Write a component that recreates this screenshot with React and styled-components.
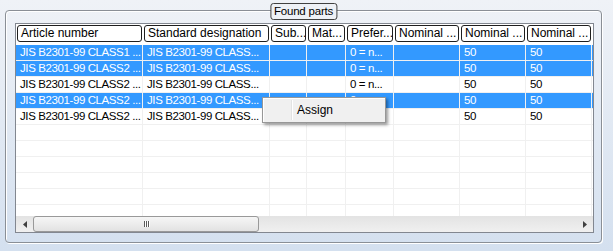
import styled, { createGlobalStyle } from 'styled-components';

const columns = [
  { title: 'Article number', width: 127 },
  { title: 'Standard designation', width: 127 },
  { title: 'Sub...', width: 37 },
  { title: 'Mat...', width: 39 },
  { title: 'Prefer...', width: 48 },
  { title: 'Nominal ...', width: 66 },
  { title: 'Nominal ...', width: 66 },
  { title: 'Nominal ...', width: 66 },
];

const rows = [
  { selected: true, cells: ['JIS B2301-99 CLASS1 ...', 'JIS B2301-99 CLASS...', '', '', '0 = n...', '', '50', '50'] },
  { selected: true, cells: ['JIS B2301-99 CLASS2 ...', 'JIS B2301-99 CLASS...', '', '', '0 = n...', '', '50', '50'] },
  { selected: false, cells: ['JIS B2301-99 CLASS2 ...', 'JIS B2301-99 CLASS...', '', '', '0 = n...', '', '50', '50'] },
  { selected: true, cells: ['JIS B2301-99 CLASS2 ...', 'JIS B2301-99 CLASS...', '', '', '0 = n...', '', '50', '50'] },
  { selected: false, cells: ['JIS B2301-99 CLASS2 ...', 'JIS B2301-99 CLASS...', '', '', '0 = n...', '', '50', '50'] },
];

const emptyRows = 7;

const App = () => {
  return (
    <Page>
      <GlobalStyle />
      <GroupBox>
        <Legend>Found parts</Legend>
        <ListView>
          <Header>
            {columns.map((col, i) => (
              <HeaderSlot key={i} $w={col.width}>
                <HeaderCell>{col.title}</HeaderCell>
              </HeaderSlot>
            ))}
          </Header>
          <Body>
            {rows.map((row, r) => (
              <Row key={r} $selected={row.selected}>
                {row.cells.map((text, c) => (
                  <Cell key={c} $w={columns[c].width}>{text}</Cell>
                ))}
              </Row>
            ))}
            {Array.from({ length: emptyRows }).map((_, r) => (
              <Row key={'e' + r}>
                {columns.map((col, c) => (
                  <Cell key={c} $w={col.width} />
                ))}
              </Row>
            ))}
          </Body>
          <ScrollBar>
            <ArrowButton>
              <svg width="4" height="7" viewBox="0 0 4 7">
                <path d="M4 0 L0 3.5 L4 7 Z" fill="#404040" />
              </svg>
            </ArrowButton>
            <Thumb>
              <Grip>
                <span />
                <span />
                <span />
              </Grip>
            </Thumb>
            <Track />
            <ArrowButton>
              <svg width="4" height="7" viewBox="0 0 4 7">
                <path d="M0 0 L4 3.5 L0 7 Z" fill="#404040" />
              </svg>
            </ArrowButton>
          </ScrollBar>
        </ListView>
      </GroupBox>
      <ContextMenu>
        <MenuGutter />
        <MenuItem>Assign</MenuItem>
      </ContextMenu>
    </Page>
  );
};

const GlobalStyle = createGlobalStyle`
  body {
    margin: 0;
    font-family: "Liberation Sans", Arial, sans-serif;
  }
`;

const Page = styled.div`
  position: relative;
  width: 613px;
  height: 251px;
  box-sizing: border-box;
  padding: 10px 11px 8px 5px;
  background: linear-gradient(#eff2f7, #d4e0ef);
  display: flex;
`;

const GroupBox = styled.div`
  position: relative;
  flex: 1;
  display: flex;
  box-sizing: border-box;
  border: 1px solid #8a8f96;
  border-radius: 4px;
  box-shadow: inset 1px 1px 0 #ffffff, 1px 1px 0 #ffffff;
  padding: 12px 7px 9px 9px;
`;

const Legend = styled.div`
  position: absolute;
  top: -8px;
  left: 50%;
  transform: translateX(-50%);
  height: 15px;
  padding: 0 3px;
  border: 1px solid #404040;
  border-radius: 3px;
  background: #eef1f6;
  font-size: 11.5px;
  line-height: 15px;
  letter-spacing: -0.2px;
  color: #000;
  white-space: nowrap;
`;

const ListView = styled.div`
  flex: 1;
  display: flex;
  flex-direction: column;
  border: 1px solid #828790;
  background: #fff;
  overflow: hidden;
`;

const Header = styled.div`
  display: flex;
  height: 21px;
  flex-shrink: 0;
  box-sizing: border-box;
  padding-top: 1px;
`;

const HeaderSlot = styled.div`
  width: ${(p) => p.$w}px;
  flex-shrink: 0;
  box-sizing: border-box;
  padding: 0 1px 0 1px;
`;

const HeaderCell = styled.div`
  height: 17px;
  box-sizing: border-box;
  border: 1px solid #1e1e1e;
  border-radius: 3px;
  padding-left: 3px;
  font-size: 12px;
  line-height: 15px;
  white-space: nowrap;
  overflow: hidden;
  color: #000;
`;

const Body = styled.div`
  flex: 1;
  overflow: hidden;
`;

const Row = styled.div`
  display: flex;
  height: 16px;
  box-sizing: border-box;
  border-bottom: 1px solid #f0f0f0;
  background: ${(p) => (p.$selected ? '#3399ff' : '#ffffff')};
  color: ${(p) => (p.$selected ? '#ffffff' : '#000000')};
`;

const Cell = styled.div`
  width: ${(p) => p.$w}px;
  flex-shrink: 0;
  box-sizing: border-box;
  border-right: 1px solid #f0f0f0;
  padding-left: 4px;
  font-size: 11.5px;
  letter-spacing: -0.4px;
  line-height: 15px;
  white-space: nowrap;
  overflow: hidden;
`;

const ScrollBar = styled.div`
  display: flex;
  height: 16px;
  flex-shrink: 0;
  background: linear-gradient(#e3e3e3, #f0f0f0);
`;

const ArrowButton = styled.div`
  width: 17px;
  display: flex;
  align-items: center;
  justify-content: center;
`;

const Thumb = styled.div`
  width: 226px;
  box-sizing: border-box;
  border: 1px solid #999;
  border-radius: 3px;
  background: linear-gradient(#f6f6f6, #e2e2e2);
  display: flex;
  align-items: center;
  justify-content: center;
`;

const Grip = styled.div`
  display: flex;
  gap: 1px;
  span {
    width: 1px;
    height: 6px;
    background: #5a5a5a;
    box-shadow: 1px 0 0 #fff;
  }
`;

const Track = styled.div`
  flex: 1;
`;

const ContextMenu = styled.div`
  position: absolute;
  left: 262px;
  top: 97px;
  width: 124px;
  height: 26px;
  box-sizing: border-box;
  display: flex;
  background: #f0f0f0;
  border: 1px solid #979797;
  box-shadow: inset 1px 1px 0 #fff, 2px 2px 3px rgba(0, 0, 0, 0.4);
`;

const MenuGutter = styled.div`
  width: 28px;
  border-right: 1px solid #e2e3e3;
  box-shadow: 1px 0 0 #fff;
  margin: 2px 0;
`;

const MenuItem = styled.div`
  padding-left: 5px;
  font-size: 12px;
  line-height: 24px;
  color: #000;
`;

export default App;
